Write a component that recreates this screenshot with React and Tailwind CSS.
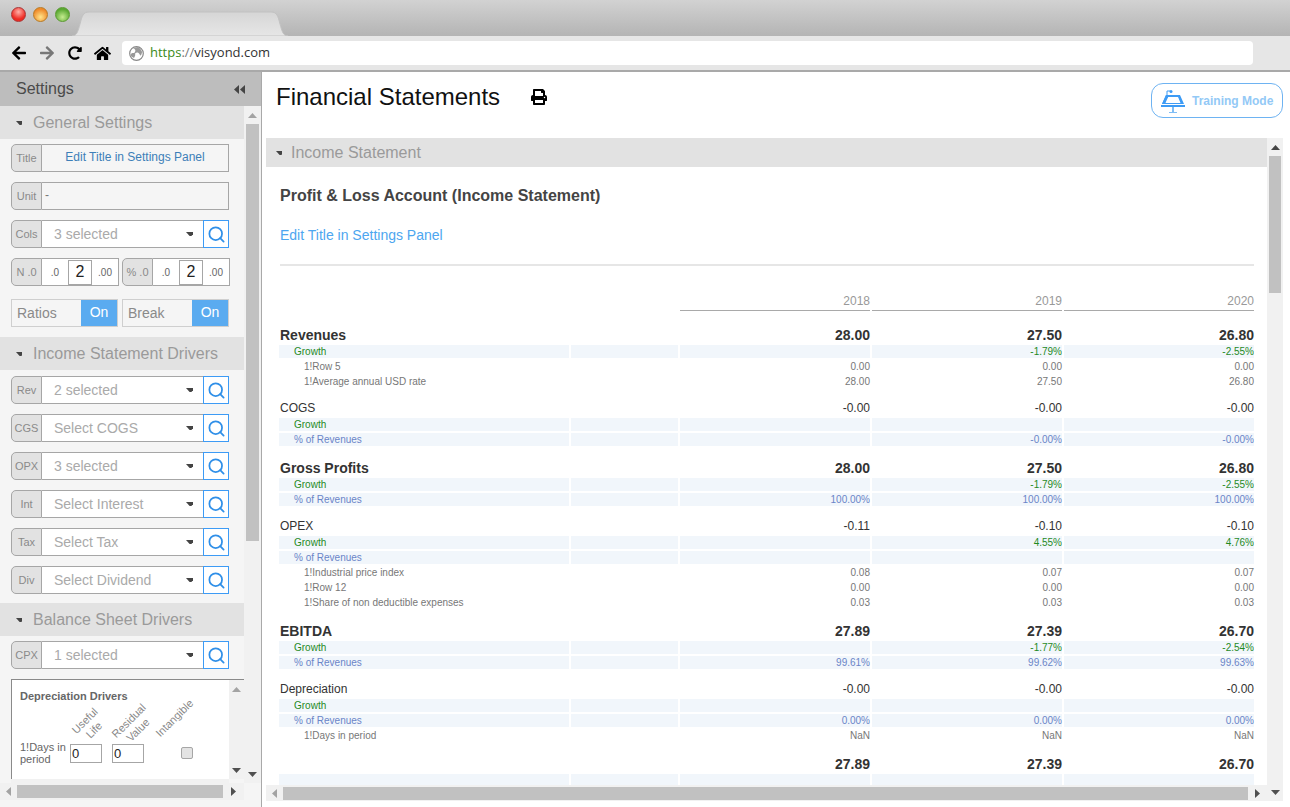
import { FaArrowLeft, FaArrowRight, FaHome, FaPrint, FaRedoAlt } from 'react-icons/fa';
import { Search } from 'lucide-react';

const FONT = "font-['Liberation_Sans',Arial,sans-serif]";

const ROWS = [
  { kind: 'bold', top: 0, label: 'Revenues', vals: ['28.00', '27.50', '26.80'] },
  { kind: 'growth', label: 'Growth', vals: ['', '-1.79%', '-2.55%'] },
  { kind: 'sub', label: '1!Row 5', vals: ['0.00', '0.00', '0.00'] },
  { kind: 'sub', label: '1!Average annual USD rate', vals: ['28.00', '27.50', '26.80'] },
  { kind: 'normal', label: 'COGS', vals: ['-0.00', '-0.00', '-0.00'] },
  { kind: 'growth', label: 'Growth', vals: ['', '', ''] },
  { kind: 'pct', label: '% of Revenues', vals: ['', '-0.00%', '-0.00%'] },
  { kind: 'bold', label: 'Gross Profits', vals: ['28.00', '27.50', '26.80'] },
  { kind: 'growth', label: 'Growth', vals: ['', '-1.79%', '-2.55%'] },
  { kind: 'pct', label: '% of Revenues', vals: ['100.00%', '100.00%', '100.00%'] },
  { kind: 'normal', label: 'OPEX', vals: ['-0.11', '-0.10', '-0.10'] },
  { kind: 'growth', label: 'Growth', vals: ['', '4.55%', '4.76%'] },
  { kind: 'pct', label: '% of Revenues', vals: ['', '', ''] },
  { kind: 'sub', label: '1!Industrial price index', vals: ['0.08', '0.07', '0.07'] },
  { kind: 'sub', label: '1!Row 12', vals: ['0.00', '0.00', '0.00'] },
  { kind: 'sub', label: '1!Share of non deductible expenses', vals: ['0.03', '0.03', '0.03'] },
  { kind: 'bold', label: 'EBITDA', vals: ['27.89', '27.39', '26.70'] },
  { kind: 'growth', label: 'Growth', vals: ['', '-1.77%', '-2.54%'] },
  { kind: 'pct', label: '% of Revenues', vals: ['99.61%', '99.62%', '99.63%'] },
  { kind: 'normal', label: 'Depreciation', vals: ['-0.00', '-0.00', '-0.00'] },
  { kind: 'growth', label: 'Growth', vals: ['', '', ''] },
  { kind: 'pct', label: '% of Revenues', vals: ['0.00%', '0.00%', '0.00%'] },
  { kind: 'sub', label: '1!Days in period', vals: ['NaN', 'NaN', 'NaN'] },
  { kind: 'bold', label: '', vals: ['27.89', '27.39', '26.70'] },
  { kind: 'growth', label: '', vals: ['', '', ''] },
];

const GRID = 'grid grid-cols-[290px_107px_190px_190px_190px] gap-x-[2px]';

function Arrow({ dir, className }) {
  const points = {
    up: '0,5 4.5,0 9,5',
    down: '0,0 9,0 4.5,5',
    left: '5,0 5,9 0,4.5',
    right: '0,0 5,4.5 0,9',
  }[dir];
  const vertical = dir === 'up' || dir === 'down';
  return (
    <svg width={vertical ? 9 : 5} height={vertical ? 5 : 9} className={className}>
      <polygon points={points} fill="currentColor" />
    </svg>
  );
}

function VScroll({ className, thumbTop, thumbHeight, arrow }) {
  return (
    <div className={`flex flex-col items-center bg-[#f1f1f1] ${className}`}>
      <div className="flex h-[18px] shrink-0 items-center justify-center">
        <Arrow dir="up" className={arrow} />
      </div>
      <div className="flex-1 min-h-0 w-full px-[2px]">
        <div className={`w-full bg-[#c1c1c1] ${thumbTop} ${thumbHeight}`} />
      </div>
      <div className="flex h-[18px] shrink-0 items-center justify-center">
        <Arrow dir="down" className="text-[#505050]" />
      </div>
    </div>
  );
}

function HScroll({ className, thumb }) {
  return (
    <div className={`flex items-center bg-[#f1f1f1] ${className}`}>
      <div className="flex w-[17px] shrink-0 items-center justify-center">
        <Arrow dir="left" className="text-[#a3a3a3]" />
      </div>
      <div className={`h-[13px] bg-[#c1c1c1] ${thumb}`} />
      <div className="flex flex-1 items-center justify-center">
        <Arrow dir="right" className="text-[#505050]" />
      </div>
    </div>
  );
}

function SectionHeader({ title }) {
  return (
    <div className="flex h-[33px] shrink-0 items-center bg-[#e2e2e2] pl-[16px]">
      <Arrow dir="down" className="mr-[11px] h-[4px] w-[6px] text-[#444]" />
      <span className="text-[16px] text-[#9a9a9a]">{title}</span>
    </div>
  );
}

function Tag({ children }) {
  return (
    <div className="flex w-[31px] shrink-0 items-center justify-center rounded-l-[5px] border border-[#a6a6a6] bg-[#e2e2e2] text-[11px] text-[#8a8a8a]">
      {children}
    </div>
  );
}

function TextField({ tag, children, blue }) {
  return (
    <div className="flex h-[28px] w-[218px]">
      <Tag>{tag}</Tag>
      <div
        className={`flex-1 border border-l-0 border-[#a6a6a6] bg-[#f5f5f5] text-[12px] leading-[24px] ${
          blue ? 'text-center text-[#3d7fb8]' : 'pl-[3px] text-[#777]'
        }`}
      >
        {children}
      </div>
    </div>
  );
}

function SelectField({ tag, value }) {
  return (
    <div className="flex h-[28px] w-[218px]">
      <Tag>{tag}</Tag>
      <div className="flex flex-1 items-center justify-between border-y border-[#a6a6a6] bg-white pl-[12px] pr-[10px] text-[14px] text-[#aaa]">
        <span>{value}</span>
        <Arrow dir="down" className="h-[4px] w-[7px] text-[#444]" />
      </div>
      <div className="flex w-[26px] shrink-0 items-center justify-center border border-[#3d9bf5] bg-white">
        <Search size={19} strokeWidth={2.2} className="text-[#2f8fe8]" />
      </div>
    </div>
  );
}

function DecimalField({ tag }) {
  return (
    <div className="flex h-[28px] w-[108px]">
      <Tag>{tag}</Tag>
      <div className="flex flex-1 items-center border border-l-0 border-[#a6a6a6] bg-white text-[10px] text-[#666]">
        <span className="w-[26px] text-center">.0</span>
        <span className="h-[25px] w-[24px] border border-[#a6a6a6] text-center text-[16px] leading-[22px] text-[#222]">2</span>
        <span className="flex-1 text-center">.00</span>
      </div>
    </div>
  );
}

function Toggle({ label }) {
  return (
    <div className="flex h-[28px] w-[107px] border border-[#cfcfcf] bg-[#f5f5f5]">
      <span className="flex-1 pl-[5px] text-[14px] leading-[27px] text-[#8a8a8a]">{label}</span>
      <span className="w-[36px] bg-[#5aabf0] text-center text-[14px] leading-[24px] text-white">On</span>
    </div>
  );
}

function DepreciationBox() {
  return (
    <div className="ml-[11px] mt-[10px] flex min-h-0 flex-1 flex-col">
      <div className="flex min-h-0 flex-1 overflow-hidden border-l border-t border-[#8a8a8a] bg-white">
        <div className="flex-1 pl-[8px] pt-[10px] text-[#666]">
          <div className="text-[11px] font-bold leading-[13px]">Depreciation Drivers</div>
          <div className="mt-[9px] grid grid-cols-[50px_42px_46px_40px] items-end">
            <div />
            <div className="h-[30px] origin-center -rotate-45 text-center text-[11px] leading-[13px] text-[#888]">Useful<br />Life</div>
            <div className="h-[30px] origin-center -rotate-45 text-center text-[11px] leading-[13px] text-[#888]">Residual<br />Value</div>
            <div className="h-[30px] origin-center -rotate-45 text-[11px] leading-[13px] text-[#888]">Intangible</div>
          </div>
          <div className="mt-[-1px] grid grid-cols-[50px_42px_46px_40px] items-center">
            <div className="text-[11px] leading-[12px]">1!Days in<br />period</div>
            <div className="h-[19px] w-[32px] border border-[#a6a6a6] pl-[1px] text-[13px] leading-[17px] text-[#222]">0</div>
            <div className="h-[19px] w-[32px] border border-[#a6a6a6] pl-[1px] text-[13px] leading-[17px] text-[#222]">0</div>
            <div className="ml-[23px] h-[12px] w-[12px] rounded-[2px] border border-[#a6a6a6] bg-[#e3e3e3]" />
          </div>
        </div>
        <VScroll className="w-[15px] shrink-0" thumbTop="mt-0" thumbHeight="h-0" arrow="text-[#a3a3a3]" />
      </div>
      <div className="h-[4px] shrink-0 bg-[#f1f1f1] mr-[15px]" />
    </div>
  );
}

function Sidebar() {
  return (
    <aside className="flex w-[262px] shrink-0 flex-col border-r border-[#a9a9a9] bg-[#f5f5f5]">
      <div className="flex h-[34px] shrink-0 items-center justify-between bg-[#bdbdbd] pl-[16px] pr-[16px]">
        <span className="text-[16px] text-[#4a4a4a]">Settings</span>
        <span className="flex">
          <Arrow dir="left" className="text-[#444]" />
          <Arrow dir="left" className="ml-[1px] text-[#444]" />
        </span>
      </div>
      <div className="flex min-h-0 flex-1">
        <div className="flex min-w-0 flex-1 flex-col overflow-hidden">
          <SectionHeader title="General Settings" />
          <div className="flex flex-col gap-[10px] pl-[11px] pt-[5px]">
            <TextField tag="Title" blue>Edit Title in Settings Panel</TextField>
            <TextField tag="Unit">-</TextField>
            <SelectField tag="Cols" value="3 selected" />
            <div className="flex gap-[3px]">
              <DecimalField tag="N .0" />
              <DecimalField tag="% .0" />
            </div>
            <div className="flex gap-[4px] pt-[3px]">
              <Toggle label="Ratios" />
              <Toggle label="Break" />
            </div>
          </div>
          <div className="mt-[10px]">
            <SectionHeader title="Income Statement Drivers" />
          </div>
          <div className="flex flex-col gap-[10px] pl-[11px] pt-[6px]">
            <SelectField tag="Rev" value="2 selected" />
            <SelectField tag="CGS" value="Select COGS" />
            <SelectField tag="OPX" value="3 selected" />
            <SelectField tag="Int" value="Select Interest" />
            <SelectField tag="Tax" value="Select Tax" />
            <SelectField tag="Div" value="Select Dividend" />
          </div>
          <div className="mt-[9px]">
            <SectionHeader title="Balance Sheet Drivers" />
          </div>
          <div className="pl-[11px] pt-[5px]">
            <SelectField tag="CPX" value="1 selected" />
          </div>
          <DepreciationBox />
        </div>
        <VScroll className="w-[17px] shrink-0" thumbTop="mt-0" thumbHeight="h-[417px]" arrow="text-[#a3a3a3]" />
      </div>
      <HScroll className="h-[17px] shrink-0 mr-[17px]" thumb="w-[206px]" />
      <div className="h-[7px] shrink-0" />
    </aside>
  );
}

function StatementRow({ row }) {
  if (row.kind === 'bold' || row.kind === 'normal') {
    const bold = row.kind === 'bold';
    return (
      <div
        className={`${GRID} h-[19px] leading-[19px] ${
          bold ? 'text-[14px] font-bold text-[#333]' : 'text-[12px] text-[#333]'
        } ${row.top === 0 ? '' : bold ? 'mt-[13px]' : 'mt-[11px]'}`}
      >
        <div className="pl-[1px]">{row.label}</div>
        <div />
        {row.vals.map((v, i) => (
          <div key={i} className="text-right">{v}</div>
        ))}
      </div>
    );
  }
  if (row.kind === 'sub') {
    return (
      <div className={`${GRID} mb-[2px] h-[13px] text-[10px] leading-[13px] text-[#777]`}>
        <div className="pl-[25px]">{row.label}</div>
        <div />
        {row.vals.map((v, i) => (
          <div key={i} className="text-right">{v}</div>
        ))}
      </div>
    );
  }
  const color = row.kind === 'growth' ? 'text-[#1f8a1f]' : 'text-[#6a85c8]';
  return (
    <div className={`${GRID} mb-[2px] h-[13px] text-[10px] leading-[13px] ${color}`}>
      <div className="bg-[#f1f6fb] pl-[15px]">{row.label}</div>
      <div className="bg-[#f1f6fb]" />
      {row.vals.map((v, i) => (
        <div key={i} className="bg-[#f1f6fb] text-right">{v}</div>
      ))}
    </div>
  );
}

function Main() {
  return (
    <main className="flex min-w-0 flex-1 flex-col bg-white">
      <div className="flex h-[66px] shrink-0 items-start pl-[14px] pr-[7px]">
        <h1 className="mt-[10px] text-[24px] leading-[30px] text-[#111]">Financial Statements</h1>
        <FaPrint className="ml-[31px] mt-[17px] text-[16px] text-black" />
        <button className="ml-auto mt-[11px] flex h-[35px] w-[132px] items-center rounded-[12px] border border-[#6eb3f2] pl-[8px] text-[12px] font-bold text-[#93c9f6]">
          <svg width="26" height="26" viewBox="0 0 26 26" className="mr-[6px]">
            <rect x="1" y="17" width="24" height="2" fill="#3d9bf5" />
            <rect x="12" y="19" width="2" height="6" fill="#7fbdf5" />
            <rect x="9" y="24" width="8" height="1" fill="#7fbdf5" />
            <path d="M6 7h14l4 9H2z M8 9l-2.5 6h15L18 9z" fill="#3d9bf5" fillRule="evenodd" />
            <path d="M7 10h11l2 5H5z" fill="#fff" />
            <path d="M2 16l4-9h3l-4 9z" fill="#3d9bf5" />
            <path d="M7 7V3h3" fill="none" stroke="#3d9bf5" strokeWidth="1" />
            <circle cx="11" cy="3.500" r="1.500" fill="#3d9bf5" />
          </svg>
          Training Mode
        </button>
      </div>
      <div className="flex min-h-0 flex-1 pl-[4px] pr-[7px]">
        <div className="flex min-w-0 flex-1 flex-col">
          <div className="flex h-[29px] shrink-0 items-center bg-[#e2e2e2] pl-[10px]">
            <Arrow dir="down" className="mr-[9px] h-[4px] w-[6px] text-[#444]" />
            <span className="text-[16px] text-[#9a9a9a]">Income Statement</span>
          </div>
          <div className="min-h-0 flex-1 overflow-hidden pl-[13px]">
            <h2 className="mt-[19px] pl-[1px] text-[16px] font-bold leading-[20px] text-[#444]">
              Profit &amp; Loss Account (Income Statement)
            </h2>
            <p className="mt-[19px] pl-[1px] text-[14px] leading-[20px] text-[#4da6f0]">Edit Title in Settings Panel</p>
            <div className="mt-[19px] ml-[1px] h-[2px] w-[974px] bg-[#e6e6e6]" />
            <div className={`${GRID} mt-[28px]`}>
              <div />
              <div />
              {['2018', '2019', '2020'].map((y) => (
                <div key={y} className="h-[17px] border-b border-[#a9a9a9] text-right text-[12px] leading-[15px] text-[#999]">{y}</div>
              ))}
            </div>
            <div className="mt-[15px]">
              {ROWS.map((row, i) => (
                <StatementRow key={i} row={row} />
              ))}
            </div>
          </div>
          <HScroll className="h-[16px] shrink-0" thumb="w-[965px]" />
        </div>
        <VScroll className="w-[16px] shrink-0" thumbTop="mt-0" thumbHeight="h-[137px]" arrow="text-[#444]" />
      </div>
      <div className="h-[6px] shrink-0" />
    </main>
  );
}

function BrowserChrome() {
  return (
    <div className="shrink-0">
      <div className="relative h-[36px] bg-gradient-to-b from-[#d2d2d2] to-[#b4b4b4]">
        <div className="flex items-center gap-[7px] pl-[11px] pt-[7px]">
          <span className="h-[15px] w-[15px] rounded-full border border-[#a33] bg-[radial-gradient(circle_at_50%_30%,#ffb0a8,#ee2a22_65%)]" />
          <span className="h-[15px] w-[15px] rounded-full border border-[#b87a22] bg-[radial-gradient(circle_at_50%_70%,#ffe58a,#ef8a2a_70%)]" />
          <span className="h-[15px] w-[15px] rounded-full border border-[#5a9a30] bg-[radial-gradient(circle_at_50%_70%,#c6ec90,#5aa832_70%)]" />
        </div>
        <svg width="216" height="25" className="absolute bottom-0 left-[72px]">
          <defs>
            <linearGradient id="tabFill" x1="0" y1="0" x2="0" y2="1">
              <stop offset="0" stopColor="#d6d6d6" />
              <stop offset="1" stopColor="#e6e6e6" />
            </linearGradient>
          </defs>
          <path d="M0 25C5 25 6 20 8 13C10 5 11 1 17 1H199C205 1 206 5 208 13C210 20 211 25 216 25Z" fill="url(#tabFill)" stroke="#c2c2c2" />
        </svg>
      </div>
      <div className="flex h-[34px] items-center bg-[#e6e6e6]">
        <div className="flex w-[122px] items-center pl-[11px] text-[16px]">
          <FaArrowLeft className="text-black" />
          <FaArrowRight className="ml-[12px] text-[#777]" />
          <FaRedoAlt className="ml-[13px] text-[14px] text-black" />
          <FaHome className="ml-[12px] text-[17px] text-black" />
        </div>
        <div className="flex h-[24px] w-[1131px] items-center rounded-[4px] bg-white pl-[7px] font-['Open_Sans',sans-serif] text-[13px]">
          <svg width="15" height="15" viewBox="0 0 15 15" className="mr-[6px]">
            <circle cx="7.500" cy="7.500" r="6.800" fill="#fff" stroke="#888" strokeWidth="1.200" />
            <path d="M4 2c2 1 3 2 2 4S3 6 2 8s1 3 3 4l1-2c1-2-1-2 1-3s3 0 4 2 2-2 2-3-2-4-4-5z" fill="#999" />
          </svg>
          <span className="text-[#3a8a20]">https</span>
          <span className="text-[#777]">://</span>
          <span className="text-[#333]">visyond.com</span>
        </div>
      </div>
      <div className="h-[2px] bg-[#a9a9a9]" />
    </div>
  );
}

export default function App() {
  return (
    <div className={`flex h-[807px] w-[1290px] flex-col overflow-hidden ${FONT}`}>
      <BrowserChrome />
      <div className="flex min-h-0 flex-1">
        <Sidebar />
        <Main />
      </div>
    </div>
  );
}
